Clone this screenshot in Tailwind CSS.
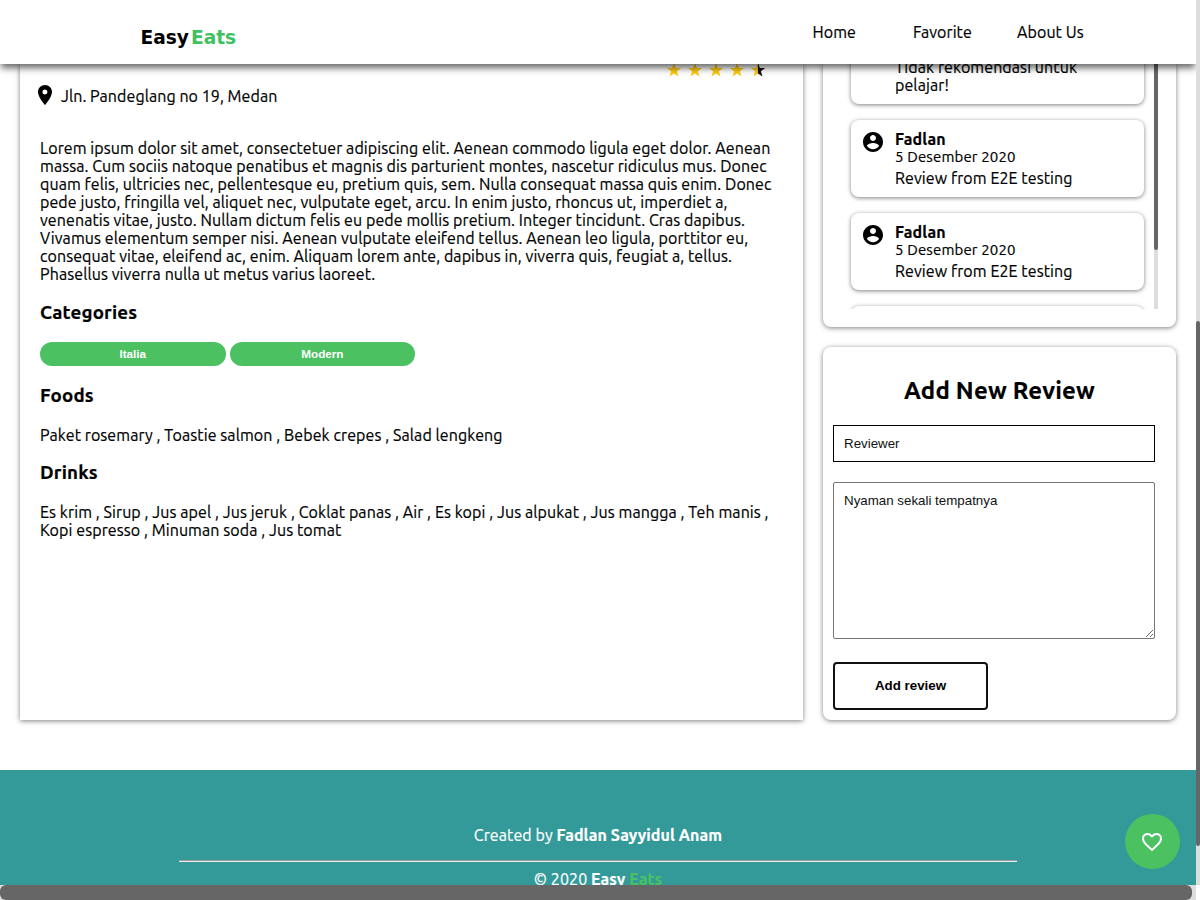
<!DOCTYPE html>
<html lang="id">
<head>
<meta charset="utf-8">
<title>EasyEats</title>
<script src="https://cdn.jsdelivr.net/npm/@tailwindcss/browser@4"></script>
</head>
<body class="bg-white text-black">
<div class="relative flex h-[900px] w-[1200px] flex-col overflow-hidden bg-white font-[Ubuntu,'Noto_Sans',sans-serif] text-[16px] leading-[18px] tracking-[0.086px] [-webkit-text-stroke:0.2px]">
  <header class="relative z-10 flex h-16 w-[1196px] shrink-0 bg-white shadow-[0_5px_7px_-1px_rgba(0,0,0,0.6)]">
    <div class="mt-[26px] ml-[140.5px] flex-1 font-['DejaVu_Sans',sans-serif] text-[18.6px] leading-[24px] font-bold tracking-normal [-webkit-text-stroke:0]">Easy<span class="ml-[2px] text-[#3fc162]">Eats</span></div>
    <nav class="flex pt-[23px]">
      <a class="w-[100.5px]">Home</a>
      <a class="w-[104px]">Favorite</a>
      <a class="w-[179px]">About Us</a>
    </nav>
  </header>

  <main class="flex h-[706px] w-[1196px] shrink-0 gap-5 pr-5 pb-[50px] pl-5">
    <section class="w-[783px] shrink-0 px-5 shadow-[0_1px_5px_rgba(0,0,0,0.5)]">
      <div class="flex h-[15px] justify-end gap-[5px] pr-[17px]">
        <svg class="-mt-[2px] h-4 w-4" viewBox="0 0 16 16"><path fill="#fc1" d="M8 .8l1.800 5.200h5.400l-4.300 3.300 1.600 5.300L8 11.400l-4.500 3.200 1.600-5.300L.8 6h5.400z"/></svg>
        <svg class="-mt-[2px] h-4 w-4" viewBox="0 0 16 16"><path fill="#fc1" d="M8 .8l1.800 5.200h5.400l-4.300 3.300 1.600 5.300L8 11.400l-4.500 3.200 1.600-5.300L.8 6h5.400z"/></svg>
        <svg class="-mt-[2px] h-4 w-4" viewBox="0 0 16 16"><path fill="#fc1" d="M8 .8l1.800 5.200h5.400l-4.300 3.300 1.600 5.300L8 11.400l-4.500 3.200 1.600-5.300L.8 6h5.400z"/></svg>
        <svg class="-mt-[2px] h-4 w-4" viewBox="0 0 16 16"><path fill="#fc1" d="M8 .8l1.800 5.200h5.400l-4.300 3.300 1.600 5.300L8 11.400l-4.500 3.200 1.600-5.300L.8 6h5.400z"/></svg>
        <svg class="-mt-[2px] h-4 w-4" viewBox="0 0 16 16"><defs><linearGradient id="half"><stop offset=".5" stop-color="#fc1"/><stop offset=".5" stop-color="#111"/></linearGradient></defs><path fill="url(#half)" d="M8 .8l1.800 5.200h5.400l-4.300 3.300 1.600 5.300L8 11.400l-4.500 3.200 1.600-5.300L.8 6h5.400z"/></svg>
      </div>
      <div class="flex h-8 items-center">
        <svg class="mr-1 -ml-[7px] h-6 w-6" viewBox="0 0 24 24"><path d="M12 2C8.130 2 5 5.130 5 9c0 5.250 7 13 7 13s7-7.750 7-13c0-3.870-3.130-7-7-7zm0 9.500a2.500 2.500 0 1 1 0-5 2.500 2.500 0 0 1 0 5z"/></svg>
        <span class="pt-[2px] tracking-[0.06px]">Jln. Pandeglang no 19, Medan</span>
      </div>
      <p class="mt-[28px] whitespace-nowrap">Lorem ipsum dolor sit amet, consectetuer adipiscing elit. Aenean commodo ligula eget dolor. Aenean<br>massa. Cum sociis natoque penatibus et magnis dis parturient montes, nascetur ridiculus mus. Donec<br>quam felis, ultricies nec, pellentesque eu, pretium quis, sem. Nulla consequat massa quis enim. Donec<br>pede justo, fringilla vel, aliquet nec, vulputate eget, arcu. In enim justo, rhoncus ut, imperdiet a,<br>venenatis vitae, justo. Nullam dictum felis eu pede mollis pretium. Integer tincidunt. Cras dapibus.<br>Vivamus elementum semper nisi. Aenean vulputate eleifend tellus. Aenean leo ligula, porttitor eu,<br>consequat vitae, eleifend ac, enim. Aliquam lorem ante, dapibus in, viverra quis, feugiat a, tellus.<br>Phasellus viverra nulla ut metus varius laoreet.</p>
      <h3 class="mt-[19px] text-[18.72px] leading-[21px] font-bold tracking-[0.17px]">Categories</h3>
      <div class="mt-[19px] flex gap-1 font-['Liberation_Sans',Arial,sans-serif] text-[11.7px] leading-6 font-bold tracking-normal text-white [-webkit-text-stroke:0]">
        <span class="h-6 w-[185.6px] rounded-full bg-[#4bc162] text-center">Italia</span>
        <span class="h-6 w-[185.6px] rounded-full bg-[#4bc162] text-center">Modern</span>
      </div>
      <h3 class="mt-[19px] text-[18.72px] leading-[21px] font-bold tracking-[0.17px]">Foods</h3>
      <p class="mt-5">Paket rosemary , Toastie salmon , Bebek crepes , Salad lengkeng</p>
      <h3 class="mt-[18px] text-[18.72px] leading-[21px] font-bold tracking-[0.17px]">Drinks</h3>
      <p class="mt-5 whitespace-nowrap">Es krim , Sirup , Jus apel , Jus jeruk , Coklat panas , Air , Es kopi , Jus alpukat , Jus mangga , Teh manis ,<br>Kopi espresso , Minuman soda , Jus tomat</p>
    </section>

    <aside class="flex w-[353px] shrink-0 flex-col gap-5">
      <section class="h-[263px] rounded-b-lg pr-[18px] pl-[14px] shadow-[0_1px_5px_rgba(0,0,0,0.5)]">
        <div class="-mt-[10px] flex h-[255px] justify-between overflow-hidden">
          <div class="flex w-[321px] flex-col gap-4 pl-[14px]">
            <article class="h-[50px] w-[293px] shrink-0 rounded-b-lg pt-1 pl-11 shadow-[0_1px_4px_rgba(0,0,0,0.5)]">
              <p>Tidak rekomendasi untuk<br>pelajar!</p>
            </article>
            <article class="flex h-[77px] w-[293px] shrink-0 rounded-lg pt-[10px] pl-[10px] shadow-[0_1px_4px_rgba(0,0,0,0.5)]">
              <svg class="mr-[10px] h-6 w-6" viewBox="0 0 24 24"><path d="M12 2C6.480 2 2 6.480 2 12s4.480 10 10 10 10-4.480 10-10S17.520 2 12 2zm0 3c1.660 0 3 1.340 3 3s-1.340 3-3 3-3-1.340-3-3 1.340-3 3-3zm0 14.200c-2.500 0-4.710-1.280-6-3.220.03-1.990 4-3.080 6-3.080 1.990 0 5.970 1.090 6 3.080-1.290 1.940-3.500 3.220-6 3.220z"/></svg>
              <div><h4 class="font-bold tracking-[0.15px]">Fadlan</h4><p class="text-[15px] leading-[17px] tracking-[0.14px]">5 Desember 2020</p><p class="mt-[4px]">Review from E2E testing</p></div>
            </article>
            <article class="flex h-[77px] w-[293px] shrink-0 rounded-lg pt-[10px] pl-[10px] shadow-[0_1px_4px_rgba(0,0,0,0.5)]">
              <svg class="mr-[10px] h-6 w-6" viewBox="0 0 24 24"><path d="M12 2C6.480 2 2 6.480 2 12s4.480 10 10 10 10-4.480 10-10S17.520 2 12 2zm0 3c1.660 0 3 1.340 3 3s-1.340 3-3 3-3-1.340-3-3 1.340-3 3-3zm0 14.200c-2.500 0-4.710-1.280-6-3.220.03-1.990 4-3.080 6-3.080 1.990 0 5.970 1.090 6 3.080-1.290 1.940-3.500 3.220-6 3.220z"/></svg>
              <div><h4 class="font-bold tracking-[0.15px]">Fadlan</h4><p class="text-[15px] leading-[17px] tracking-[0.14px]">5 Desember 2020</p><p class="mt-[4px]">Review from E2E testing</p></div>
            </article>
            <article class="h-[77px] w-[293px] shrink-0 rounded-lg shadow-[0_1px_4px_rgba(0,0,0,0.5)]"></article>
          </div>
          <div class="flex w-1 flex-col justify-start bg-[#ddd]"><div class="h-[196px] rounded-b-sm bg-[#666]"></div></div>
        </div>
      </section>
      <section class="h-[373px] rounded-lg px-[10px] pt-[30px] shadow-[0_1px_5px_rgba(0,0,0,0.5)]">
        <h2 class="text-center text-[24px] leading-[28px] font-bold tracking-[0.18px]">Add New Review</h2>
        <form class="flex flex-col items-start font-['Liberation_Sans',Arial,sans-serif] text-[13.333px] tracking-normal [-webkit-text-stroke:0]">
          <input class="mt-5 h-[37px] w-[322px] border border-black px-[10px] text-[#111]" value="Reviewer">
          <textarea class="mt-5 h-[157px] w-[322px] resize rounded-[2px] border border-[#767676] p-[10px] leading-[15px] text-[#111]">Nyaman sekali tempatnya</textarea>
          <button type="button" class="mt-[23px] h-12 w-[155px] rounded border-2 border-[#111] font-bold">Add review</button>
        </form>
      </section>
    </aside>
  </main>

  <footer class="flex h-[115px] w-[1196px] shrink-0 flex-col items-center overflow-hidden bg-[#339999] pt-14 text-white">
    <p>Created by <b>Fadlan Sayyidul Anam</b></p>
    <div class="mt-[16px] h-[2px] w-[838px] shrink-0 border-t border-[#9a9a9a] bg-[#eee]"></div>
    <p class="mt-[8px] shrink-0">© 2020 <b>Easy <span class="text-[#4bc162]">Eats</span></b></p>
  </footer>
  <div class="relative h-[15px] w-[1196px] shrink-0 bg-[#ddd]"><div class="h-[15px] w-[1192px] rounded-[6px] bg-[#666]"></div></div>

  <button class="absolute top-[814px] left-[1125px] z-20 flex h-[55px] w-[55px] items-center justify-center rounded-full bg-[#4bc162] pr-px" aria-label="like">
    <svg class="h-6 w-6" viewBox="0 0 24 24" fill="#fff"><path d="M16.500 3c-1.740 0-3.410.81-4.500 2.090C10.910 3.810 9.240 3 7.500 3 4.420 3 2 5.420 2 8.500c0 3.780 3.400 6.860 8.550 11.540L12 21.350l1.450-1.320C18.600 15.360 22 12.280 22 8.500 22 5.420 19.580 3 16.500 3zm-4.400 15.550l-.1.100-.1-.1C7.140 14.240 4 11.390 4 8.500 4 6.500 5.500 5 7.500 5c1.540 0 3.040.99 3.570 2.360h1.870C13.460 5.990 14.960 5 16.500 5c2 0 3.500 1.500 3.500 3.500 0 2.890-3.140 5.740-7.900 10.050z"/></svg>
  </button>
  <div class="absolute top-0 right-0 z-30 h-[885px] w-1 bg-[#ddd] pt-[321px]"><div class="h-[525px] rounded-sm bg-[#666]"></div></div>
</div>
</body>
</html>
